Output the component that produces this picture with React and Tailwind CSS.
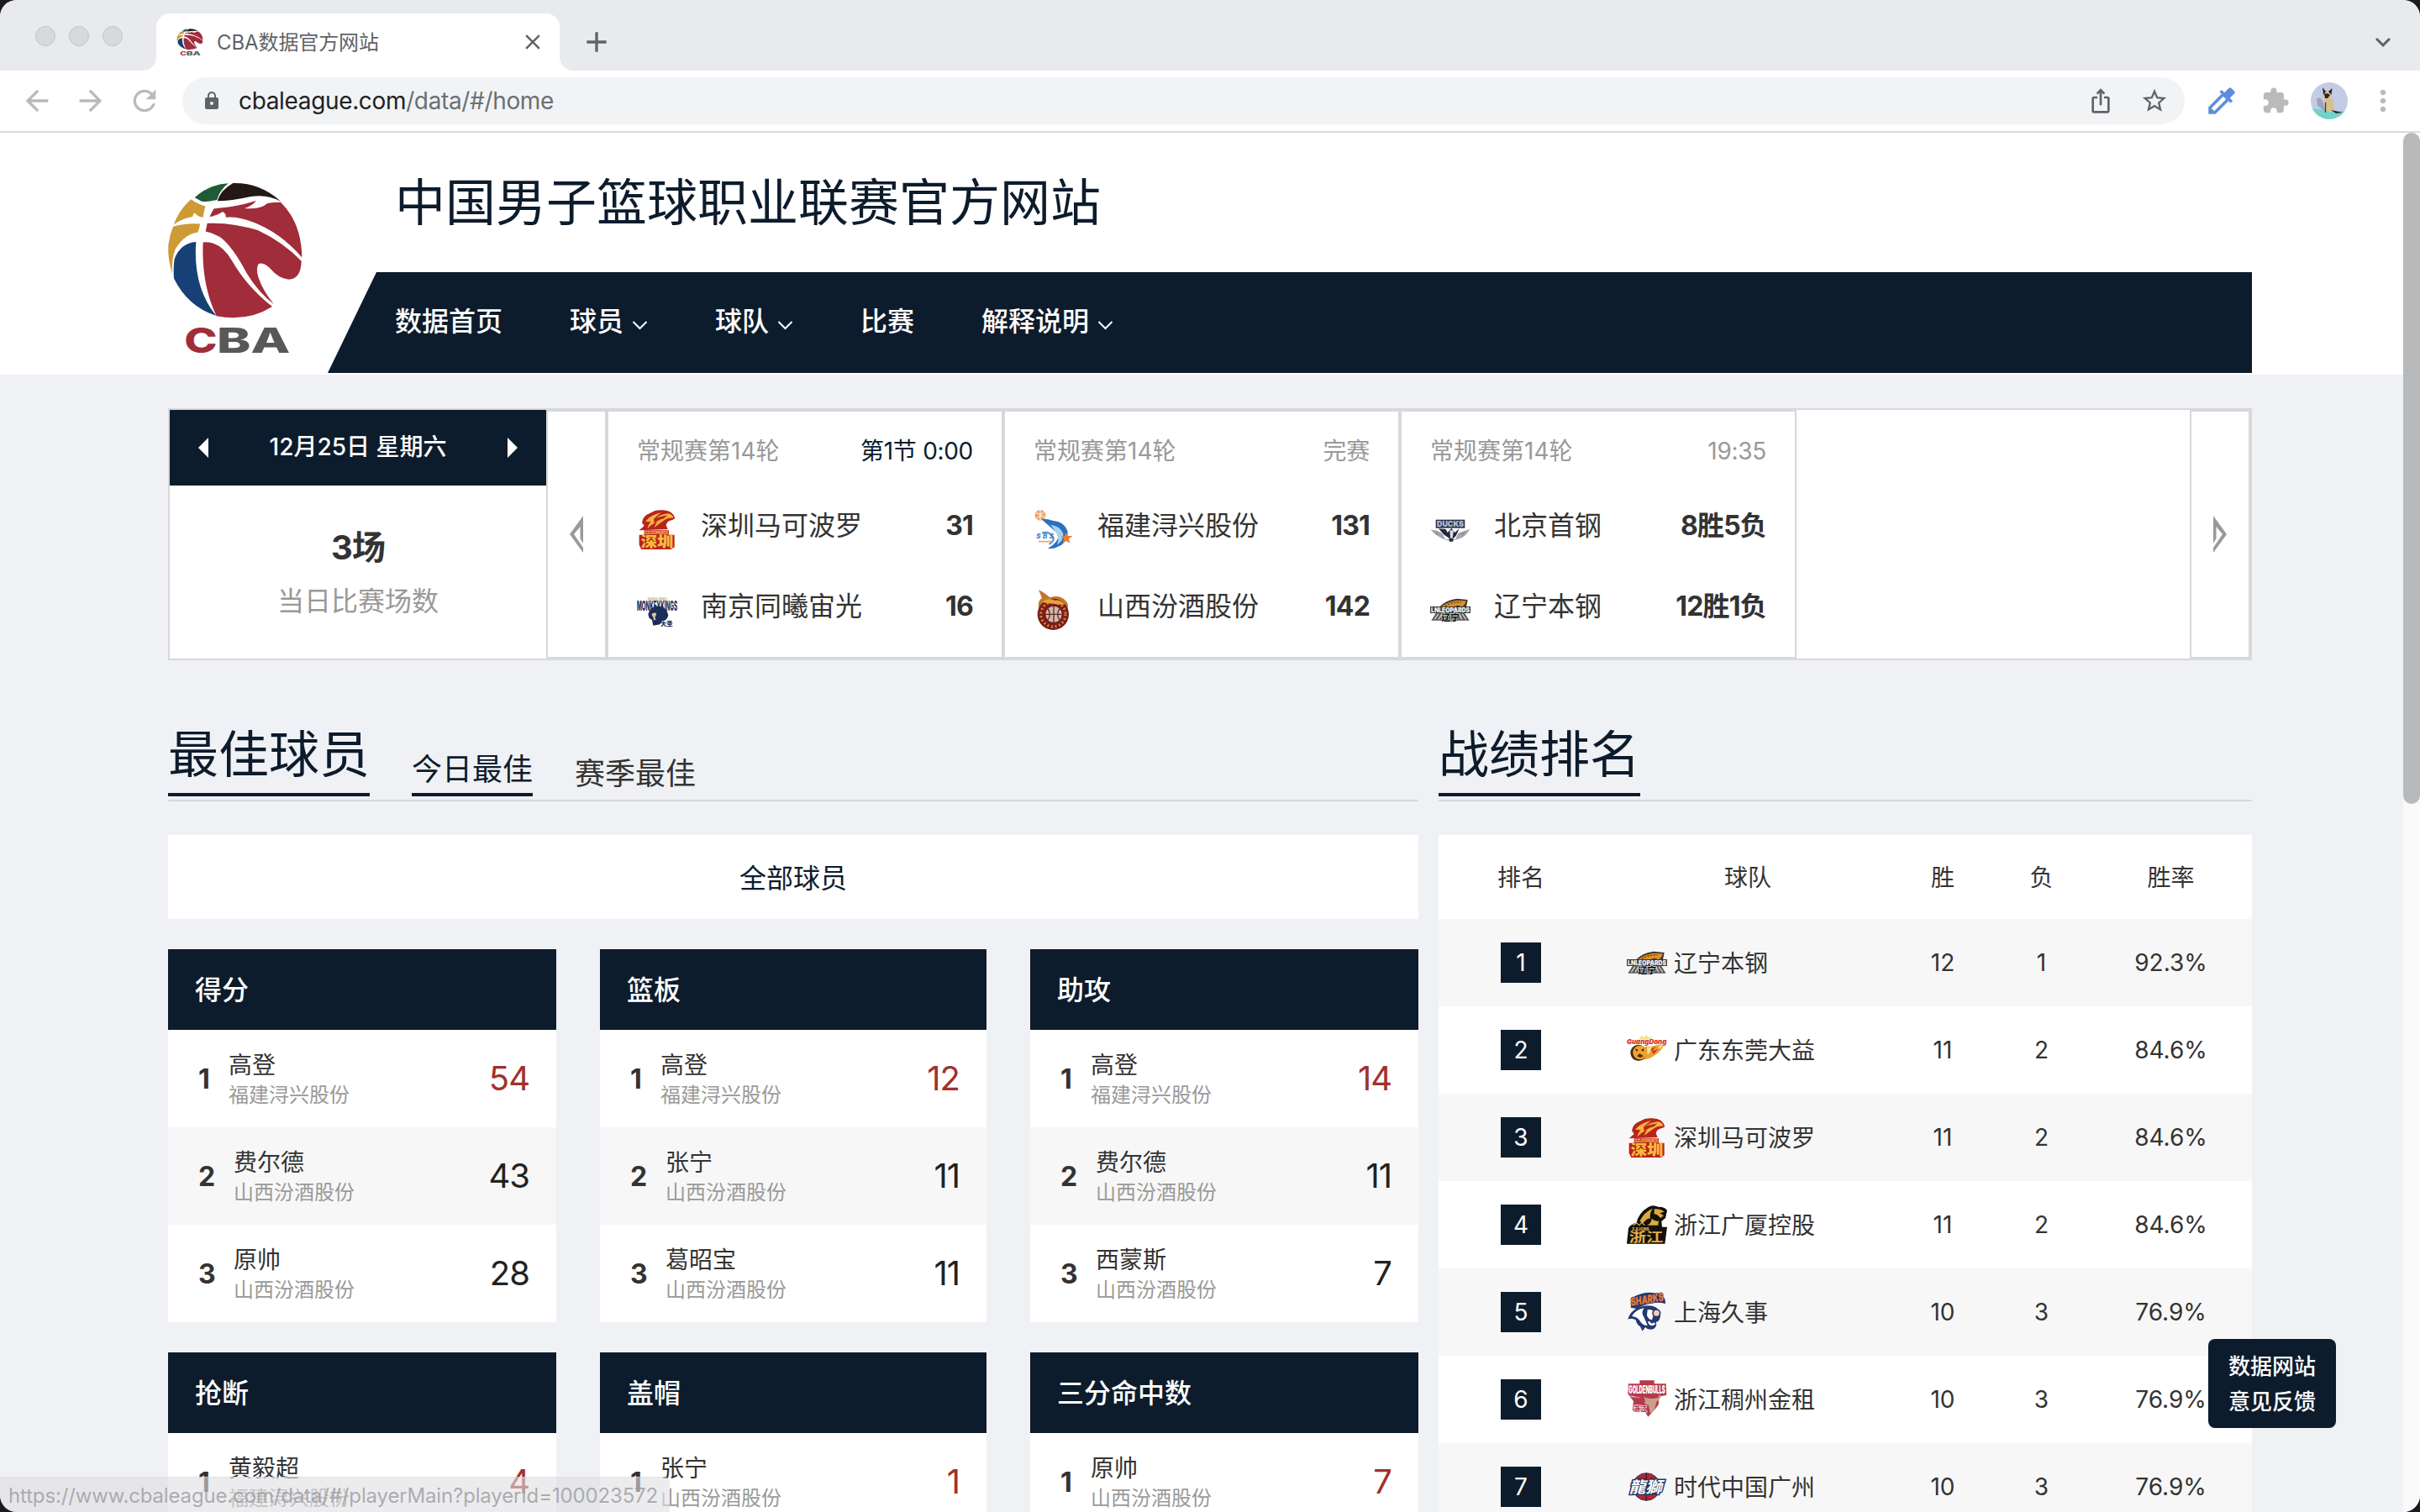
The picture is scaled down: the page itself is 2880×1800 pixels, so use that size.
import React from "react";
import {
  MdAdd,
  MdArrowBack,
  MdArrowForward,
  MdClose,
  MdColorize,
  MdExtension,
  MdIosShare,
  MdKeyboardArrowDown,
  MdLock,
  MdMoreVert,
  MdRefresh,
  MdStarBorder,
} from "react-icons/md";

/* ---------- logos ---------- */

function CbaLogo({ className }) {
  return (
    <svg viewBox="24 34 492 620" preserveAspectRatio="none" className={className}>
      <path fill="#1d5c36" d="M125 92Q175 45 245 41Q214 65 205 99Q176 108 150 105Q137 98 125 92Z" />
      <path fill="#231815" d="M262 40Q360 38 432 105Q385 78 325 88Q255 104 206 104Q217 65 262 40Z" />
      <path fill="#cd9a35" d="M112 98Q135 115 163 122Q158 140 155 162Q135 160 126 146Q120 146 118 160Q80 166 50 188Q70 135 112 98Z" />
      <path fill="#cd9a35" d="M48 195Q90 182 144 185Q142 205 136 216Q90 220 56 275Q42 310 45 362Q28 310 31 260Q36 225 48 195Z" />
      <path fill="#174076" d="M53 310Q75 254 130 250Q118 410 202 513Q100 480 51 380Q48 340 53 310Z" />
      <path fill="#a12c3a" d="M193 131Q290 122 345 102Q330 122 302 130Q360 135 385 112Q405 108 432 108Q506 180 508 305Q430 215 330 178Q280 158 236 162Q238 148 225 142Q205 156 178 160Z" />
      <path fill="#a12c3a" d="M170 183Q260 180 350 208Q440 250 506 318Q505 382 460 384Q425 380 395 345Q370 320 353 328Q343 342 352 375Q367 422 408 472Q352 430 310 360Q260 265 215 232Q190 218 164 212Z" />
      <path fill="#a12c3a" d="M155 251Q215 245 258 316Q312 410 402 480Q315 535 203 514Q148 400 155 251Z" />
      <text x="88" y="646" fontFamily="Inter, sans-serif" fontWeight="800" fontSize="124" textLength="118" lengthAdjust="spacingAndGlyphs" fill="#a12c3a">C</text>
      <text x="204" y="646" fontFamily="Inter, sans-serif" fontWeight="800" fontSize="124" textLength="262" lengthAdjust="spacingAndGlyphs" fill="#595757">BA</text>
    </svg>
  );
}

const CJK = '"Noto Sans CJK SC", sans-serif';
const LATIN = "Inter, sans-serif";

function Mark({ id }) {
  switch (id) {
    case "shenzhen":
      return (
        <>
          <path fill="#b8231c" d="M18 48Q22 22 48 14Q66 2 92 4Q128 4 136 34L128 38Q106 42 104 58L110 72L8 76L26 60Z" />
          <path fill="#f6b53c" d="M30 44Q50 20 88 12Q66 26 62 36Q84 18 112 16Q128 20 130 32Q112 30 100 38Q84 48 62 66Q64 54 74 46Q52 54 38 70Q38 58 50 46Q38 44 30 44Z" />
          <path fill="#b8231c" d="M60 34Q84 26 110 22L96 34Q76 38 62 52Z" />
          <path fill="#b8231c" d="M26 76H114V92H134V136L122 144H16L8 128V92H26Z" />
          <text x="28" y="90" fontFamily={LATIN} fontWeight="800" fontSize="14" textLength="84" fill="#f6b53c">SZLEOPARDS</text>
          <text x="14" y="136" fontFamily={CJK} fontWeight="900" fontSize="50" textLength="116" lengthAdjust="spacingAndGlyphs" fill="#f8bc40">深圳</text>
        </>
      );
    case "nanjing":
      return (
        <>
          <text x="38" y="38" fontFamily={LATIN} fontWeight="800" fontSize="16" textLength="70" fill="#cdbfa0">NANJING</text>
          <text x="0" y="76" fontFamily={LATIN} fontWeight="800" fontSize="48" textLength="144" lengthAdjust="spacingAndGlyphs" fill="#1c2d59">MONKEYKINGS</text>
          <path fill="#1c2d59" d="M40 88Q46 60 76 58Q108 62 112 92Q106 112 92 110L82 124L58 128L54 108L44 102Z" />
          <path fill="#dfc9a4" d="M52 88Q62 78 70 86L64 100L68 108H60L58 98Z" />
          <text x="84" y="128" fontFamily={CJK} fontWeight="900" fontSize="22" fill="#1c2d59">大圣</text>
        </>
      );
    case "fujian":
      return (
        <>
          <circle cx="24" cy="22" r="19" fill="#f2a168" />
          <path d="M8 14Q28 24 38 10M12 34Q26 16 40 30M24 3V40" stroke="#fff" strokeWidth="3" fill="none" />
          <path fill="#2c70c0" d="M28 36Q46 34 70 42Q112 46 122 82Q124 110 100 128L74 140L50 142Q92 116 90 90Q66 70 28 36Z" />
          <path fill="#a8d3f0" d="M60 56Q96 60 106 88Q108 112 84 128Q98 98 60 56Z" />
          <path d="M30 86Q54 78 66 96Q80 110 56 126" stroke="#4c8ed0" strokeWidth="6" fill="none" />
          <text x="10" y="106" fontFamily={LATIN} fontWeight="800" fontStyle="italic" fontSize="24" textLength="62" fill="#3f7fc6">SBS</text>
          <path fill="#e77c35" d="M116 84L122 96H140L126 106L130 122L116 114L104 122L108 106L98 98L110 96Z" />
          <path d="M18 116H66" stroke="#f2a168" strokeWidth="5" />
        </>
      );
    case "shanxi":
      return (
        <>
          <path fill="#c5762b" d="M18 0Q44 14 58 28Q98 14 120 46Q128 66 116 70L20 74Q12 40 30 30Z" />
          <circle cx="70" cy="88" r="56" fill="#7a1d1b" />
          <circle cx="70" cy="88" r="44" fill="none" stroke="#d48a35" strokeWidth="9" strokeDasharray="6 8" />
          <circle cx="72" cy="88" r="29" fill="#cdb9ae" />
          <path d="M72 58V118M42 88H102M50 66Q66 88 50 110M94 66Q78 88 94 110" stroke="#6d2220" strokeWidth="4" fill="none" />
          <path fill="#e7a13e" d="M30 44Q52 26 76 38Q96 34 112 52Q94 56 74 50Q48 50 30 44Z" />
        </>
      );
    case "beijing":
      return (
        <>
          <path fill="#a7a3b7" d="M2 74Q30 74 44 88L54 108H90L100 86Q120 78 142 72Q126 98 110 104L84 112H60Q22 98 2 74Z" />
          <rect x="20" y="38" width="104" height="30" fill="#2b3650" />
          <text x="24" y="63" fontFamily={LATIN} fontWeight="900" fontSize="28" textLength="96" lengthAdjust="spacingAndGlyphs" fill="#b8c0d2">DUCKS</text>
          <path fill="#232a3f" d="M30 70L56 72L62 84L76 68L88 84L104 70L92 96L82 106V116H68V104L50 92Z" />
          <path fill="#ddd5e8" d="M70 76H84L80 104H72Z" />
          <path fill="#b1823d" d="M14 80L34 90L24 92ZM128 80L108 90L118 92Z" />
        </>
      );
    case "liaoning":
      return (
        <>
          <path fill="#3a342c" d="M30 64Q56 36 96 32L134 36L128 66H30Z" />
          <path fill="#d98f2b" d="M40 60Q64 42 96 38L128 40Q124 58 112 62Q100 50 84 62Z" />
          <path d="M54 58Q76 44 110 44" stroke="#5b3a14" strokeWidth="4" strokeDasharray="6 5" fill="none" />
          <path fill="#5a5a5a" d="M22 82H122L140 110H94V114H46V110H4Z" />
          <path d="M30 86L16 106M42 86L30 106M104 86L114 106M114 86L128 106" stroke="#d4d4d4" strokeWidth="4" />
          <rect x="0" y="60" width="144" height="24" fill="#3a3a3a" />
          <text x="3" y="80" fontFamily={LATIN} fontWeight="900" fontSize="22" textLength="138" lengthAdjust="spacingAndGlyphs" fill="#f4f4f4">LNLEOPARDS</text>
          <text x="40" y="112" fontFamily={CJK} fontWeight="900" fontSize="32" textLength="66" lengthAdjust="spacingAndGlyphs" fill="#0c0c0c" stroke="#d6d6d6" strokeWidth="4" paintOrder="stroke">辽宁</text>
        </>
      );
    case "guangdong":
      return (
        <>
          <path fill="#f9e08a" d="M44 34L52 20L60 28L70 18L78 28L90 24L88 38H40Z" />
          <path fill="#eba233" d="M66 60Q104 60 140 42Q126 76 98 92Q82 104 58 106Z" />
          <path fill="#c5462a" d="M84 68L104 60L92 76L112 68L96 88Z" />
          <path fill="#f9e08a" d="M72 62L90 60L82 82L74 90ZM112 60L132 50L118 68Z" />
          <circle cx="42" cy="82" r="29" fill="#4a2b18" />
          <circle cx="47" cy="81" r="25" fill="#eda72f" />
          <path fill="#5a2c13" d="M30 66L42 72L34 78ZM62 66L50 72L60 78ZM36 94L46 84L60 94L48 100Z" />
          <text x="0" y="50" fontFamily={LATIN} fontWeight="900" fontStyle="italic" fontSize="24" textLength="142" lengthAdjust="spacingAndGlyphs" fill="#d5352d" stroke="#fff" strokeWidth="3" paintOrder="stroke">GuangDong</text>
        </>
      );
    case "guangsha":
      return (
        <>
          <path fill="#14110c" d="M0 140L6 84Q14 70 34 66Q44 28 76 10Q92 -2 112 8Q140 8 144 22L138 48L124 60L126 80H144L136 140Z" />
          <path fill="#dca93f" d="M46 60Q60 28 92 14Q80 34 84 50Q74 46 58 66ZM98 16Q120 14 134 26L118 30L132 40L120 48Q110 34 98 34ZM88 50Q104 62 114 58L112 74H72Q90 66 88 50Z" />
          <path d="M22 74L36 66L44 74L54 64L64 74" stroke="#dca93f" strokeWidth="4" fill="none" />
          <text x="18" y="92" fontFamily={LATIN} fontWeight="900" fontSize="14" textLength="62" fill="#dca93f">ZJLIONS</text>
          <text x="8" y="132" fontFamily={CJK} fontWeight="700" fontSize="44" textLength="122" lengthAdjust="spacingAndGlyphs" fill="#e2b045">浙江</text>
        </>
      );
    case "shanghai":
      return (
        <>
          <path fill="#23386e" d="M20 20Q70 -8 116 8Q140 16 138 42Q90 30 36 60L14 56Z" />
          <text x="16" y="50" transform="rotate(-9 16 50)" fontFamily={LATIN} fontWeight="900" fontStyle="italic" fontSize="40" textLength="118" lengthAdjust="spacingAndGlyphs" fill="#e97832" stroke="#23386e" strokeWidth="4" paintOrder="stroke">SHARKS</text>
          <path fill="#23386e" d="M4 98Q14 60 60 50Q110 44 120 76Q122 104 104 108Q110 122 96 132Q76 138 66 126L56 140L48 124Q36 118 32 100Q18 92 4 98Z" />
          <path fill="#fff" d="M18 86Q34 62 62 58Q50 74 60 88Q66 100 74 120Q58 120 50 108Q42 90 18 86ZM74 64Q92 60 98 74L90 100Q78 100 72 84Z" />
          <circle cx="106" cy="76" r="13" fill="#f0cdb4" stroke="#23386e" strokeWidth="5" />
          <path d="M78 106Q86 124 100 112" stroke="#fff" strokeWidth="8" fill="none" />
        </>
      );
    case "bulls":
      return (
        <>
          <path fill="#b53a4c" d="M46 4H98V16H140L142 56L114 62V92L76 134L62 110L20 112L24 78L10 60L4 52L6 16H46Z" />
          <text x="7" y="50" fontFamily={LATIN} fontWeight="900" fontSize="40" textLength="130" lengthAdjust="spacingAndGlyphs" fill="#fff">GOLDENBULLS</text>
          <path fill="#fff" d="M8 58L50 66L30 68ZM112 92L122 64L142 60V140H80Z" />
          <path fill="#b53a4c" d="M14 64Q50 62 76 78L64 108L34 104L50 92L22 86L40 80Z" />
          <path fill="#caa08a" d="M60 62Q80 74 112 66Q118 54 116 50Q130 66 106 80L98 112L84 122L78 94L62 86Q70 76 60 62Z" />
          <text x="24" y="114" fontFamily={CJK} fontWeight="900" fontSize="24" fill="#b53a4c" stroke="#fff" strokeWidth="3" paintOrder="stroke">浙江</text>
        </>
      );
    case "guangzhou":
      return (
        <>
          <circle cx="70" cy="72" r="49" fill="#b9252d" stroke="#27375f" strokeWidth="3" />
          <path d="M70 24V120M30 44Q70 60 110 44M30 100Q70 84 110 100" stroke="#4c1320" strokeWidth="4" fill="none" />
          <text x="8" y="93" fontFamily={CJK} fontWeight="700" fontStyle="italic" fontSize="56" textLength="118" lengthAdjust="spacingAndGlyphs" fill="#fff" stroke="#27375f" strokeWidth="9" paintOrder="stroke">龍獅</text>
        </>
      );
    default:
      return null;
  }
}

function TeamLogo({ id }) {
  return (
    <svg viewBox="0 0 144 144" className="h-12 w-12 shrink-0 overflow-visible">
      <Mark id={id} />
    </svg>
  );
}

/* ---------- data ---------- */

const NAV = [
  { label: "数据首页" },
  { label: "球员", menu: true },
  { label: "球队", menu: true },
  { label: "比赛" },
  { label: "解释说明", menu: true },
];

const GAMES = [
  { status: "第1节 0:00", live: true, teams: [["shenzhen", "深圳马可波罗", "31"], ["nanjing", "南京同曦宙光", "16"]] },
  { status: "完赛", teams: [["fujian", "福建浔兴股份", "131"], ["shanxi", "山西汾酒股份", "142"]] },
  { status: "19:35", teams: [["beijing", "北京首钢", "8胜5负"], ["liaoning", "辽宁本钢", "12胜1负"]] },
];

const FJ = "福建浔兴股份";
const SX = "山西汾酒股份";
const LEADERS = [
  { title: "得分", rows: [["高登", FJ, 54], ["费尔德", SX, 43], ["原帅", SX, 28]] },
  { title: "篮板", rows: [["高登", FJ, 12], ["张宁", SX, 11], ["葛昭宝", SX, 11]] },
  { title: "助攻", rows: [["高登", FJ, 14], ["费尔德", SX, 11], ["西蒙斯", SX, 7]] },
  { title: "抢断", rows: [["黄毅超", FJ, 4]] },
  { title: "盖帽", rows: [["张宁", SX, 1]] },
  { title: "三分命中数", rows: [["原帅", SX, 7]] },
];

const STANDINGS = [
  ["liaoning", "辽宁本钢", 12, 1, "92.3%"],
  ["guangdong", "广东东莞大益", 11, 2, "84.6%"],
  ["shenzhen", "深圳马可波罗", 11, 2, "84.6%"],
  ["guangsha", "浙江广厦控股", 11, 2, "84.6%"],
  ["shanghai", "上海久事", 10, 3, "76.9%"],
  ["bulls", "浙江稠州金租", 10, 3, "76.9%"],
  ["guangzhou", "时代中国广州", 10, 3, "76.9%"],
];

/* ---------- browser chrome ---------- */

function TabStrip() {
  return (
    <div className="flex h-[84px] shrink-0 items-end bg-[#e8eaed]">
      <div className="flex h-[82px] w-[186px] items-center gap-4 pl-[42px]">
        <span className="h-6 w-6 rounded-full border-[1.5px] border-[#c3c4c7] bg-[#d8d9dc]" />
        <span className="h-6 w-6 rounded-full border-[1.5px] border-[#c3c4c7] bg-[#d8d9dc]" />
        <span className="h-6 w-6 rounded-full border-[1.5px] border-[#c3c4c7] bg-[#d8d9dc]" />
      </div>
      <div className="relative flex h-[68px] w-[480px] items-center rounded-t-[16px] bg-white pl-6">
        <svg viewBox="0 0 16 16" className="absolute bottom-0 -left-4 h-4 w-4">
          <path d="M16 0V16H0A16 16 0 0 0 16 0Z" fill="#fff" />
        </svg>
        <svg viewBox="0 0 16 16" className="absolute -right-4 bottom-0 h-4 w-4">
          <path d="M0 0V16H16A16 16 0 0 1 0 0Z" fill="#fff" />
        </svg>
        <CbaLogo className="h-8 w-8" />
        <span className="ml-4 w-[361px] pt-px text-[24px] leading-8 tracking-[-0.1px] text-[#5f6368]">CBA数据官方网站</span>
        <MdClose className="h-[30px] w-[30px] shrink-0 text-[#5f6368]" />
      </div>
      <div className="flex h-[68px] flex-1 items-center justify-between pr-[26px] pl-[24px]">
        <MdAdd className="h-[40px] w-[40px] text-[#5f6368]" />
        <MdKeyboardArrowDown className="h-9 w-9 text-[#5f6368]" />
      </div>
    </div>
  );
}

function Avatar() {
  return (
    <svg viewBox="0 0 44 44" className="h-11 w-11 overflow-hidden rounded-full">
      <rect width="44" height="44" fill="#c3cbe6" />
      <path d="M0 31L44 35V44H0Z" fill="#74d3c8" />
      <path d="M7 20Q11 16 14 22L17 34L8 28Z" fill="#9aa3c0" />
      <path d="M16 10H24L24 18Q29 24 28 35H17L16 20Z" fill="#d7bf92" />
      <path d="M14 6L18 11L15 15ZM25.500 7L21 11L24.500 15ZM16 14Q20 12 23 15L20 19H17Z" fill="#2b2523" />
      <path d="M24 33L38 36L30 37Z" fill="#2b2523" />
      <path d="M17.500 24V36" stroke="#4a3a2c" strokeWidth="1.4" />
    </svg>
  );
}

function Toolbar() {
  return (
    <div className="flex h-[74px] shrink-0 items-center border-b-2 border-[#dadbde] bg-white">
      <div className="flex w-[217px] items-center gap-6 pl-6">
        <MdArrowBack className="h-10 w-10 text-[#bababc]" />
        <MdArrowForward className="h-10 w-10 text-[#bababc]" />
        <MdRefresh className="h-10 w-10 text-[#bababc]" />
      </div>
      <div className="flex h-14 w-[2383px] items-center rounded-full bg-[#f1f3f4] pr-[19px] pl-[23px]">
        <MdLock className="h-6 w-6 text-[#5f6368]" />
        <span className="ml-5 flex-1 text-[28px] leading-9 tracking-[-0.35px] text-[#202124]">
          cbaleague.com<span className="text-[#6b6f73]">/data/#/home</span>
        </span>
        <MdIosShare className="mr-[31px] h-8 w-8 text-[#5f6368]" />
        <MdStarBorder className="h-[34px] w-[34px] text-[#5f6368]" />
      </div>
      <div className="flex flex-1 items-center pl-[23px]">
        <MdColorize className="h-[42px] w-[42px] text-[#5b8fdc]" />
        <MdExtension className="ml-[26px] h-[34px] w-[34px] text-[#bababc]" />
        <span className="ml-[25px]">
          <Avatar />
        </span>
        <MdMoreVert className="ml-[22px] h-10 w-10 text-[#bababc]" />
      </div>
    </div>
  );
}

/* ---------- page ---------- */

function SiteHeader() {
  return (
    <header className="flex h-[288px] shrink-0 bg-white pl-[198px]">
      <CbaLogo className="mt-[58px] h-[207px] w-[164px]" />
      <div className="flex w-[2318px] flex-col">
        <h1 className="flex h-[166px] items-center pl-[108px] text-[60px] leading-none text-[#0d1c2c]">中国男子篮球职业联赛官方网站</h1>
        <nav className="ml-[28px] flex h-[120px] items-center gap-20 bg-[#0d1c2c] pl-[80px] text-[32px] font-medium text-white [clip-path:polygon(58px_0,100%_0,100%_100%,0_100%)]">
          {NAV.map((item) => (
            <span key={item.label} className="flex items-center gap-[10px] pb-[2px] leading-none">
              {item.label}
              {item.menu && (
                <svg viewBox="0 0 19 12" className="mt-2 h-3 w-[19px]">
                  <path d="M1.5 2L9.5 10L17.5 2" fill="none" stroke="#fff" strokeWidth="2" />
                </svg>
              )}
            </span>
          ))}
        </nav>
      </div>
    </header>
  );
}

function GameCard({ game }) {
  return (
    <div className="w-[472px] border-2 border-[#d7d8d9] px-[34px]">
      <div className="flex h-[92px] items-center justify-between pt-px text-[28px] text-[#999]">
        <span>常规赛第14轮</span>
        <span className={game.live ? "tracking-[-0.3px] text-[#0d1c2c]" : "tracking-[-0.3px]"}>{game.status}</span>
      </div>
      {game.teams.map(([id, name, score]) => (
        <div key={name} className="flex h-24 items-center text-[32px] text-[#333]">
          <TeamLogo id={id} />
          <span className="ml-7 flex-1 pb-[9px] leading-none">{name}</span>
          <span className="pb-[9px] leading-none font-bold tracking-[-0.8px]">{score}</span>
        </div>
      ))}
    </div>
  );
}

function Schedule() {
  return (
    <section className="flex h-[300px] border-2 border-[#d7d8d9] bg-white">
      <div className="flex w-[448px] flex-col">
        <div className="flex h-[90px] items-center justify-between bg-[#0d1c2c] px-[34px] text-[28px] text-white">
          <svg viewBox="0 0 12 24" className="h-6 w-3">
            <path d="M12 0V24L0 12Z" fill="#fff" />
          </svg>
          <span className="pb-[2px] leading-none font-medium">12月25日 星期六</span>
          <svg viewBox="0 0 12 24" className="h-6 w-3">
            <path d="M0 0V24L12 12Z" fill="#fff" />
          </svg>
        </div>
        <div className="flex flex-1 flex-col items-center pt-[54px]">
          <span className="text-[40px] leading-10 font-bold tracking-[-0.8px] text-[#333]">3场</span>
          <span className="mt-6 text-[32px] leading-10 text-[#999]">当日比赛场数</span>
        </div>
      </div>
      <div className="flex w-[72px] items-center justify-center border-2 border-[#d7d8d9]">
        <svg viewBox="0 0 16 44" className="h-11 w-4">
          <path fill="#999" d="M16 0V33L12.500 27V13L5 22L16 38V44L0 22Z" />
        </svg>
      </div>
      {GAMES.map((g) => (
        <GameCard key={g.status} game={g} />
      ))}
      <div className="flex-1" />
      <div className="flex w-[72px] items-center justify-center border-2 border-[#d7d8d9]">
        <svg viewBox="0 0 16 44" className="h-11 w-4">
          <path fill="#999" d="M0 0V33L3.500 27V13L11 22L0 38V44L16 22Z" />
        </svg>
      </div>
    </section>
  );
}

function LeaderCard({ card }) {
  return (
    <div className="bg-white">
      <div className="flex h-24 items-center bg-[#0d1c2c] px-8 pt-[2px] text-[32px] font-medium text-white">{card.title}</div>
      {card.rows.map(([name, team, value], i) => (
        <div key={name} className={i === 1 ? "flex h-[116px] items-center bg-[#f7f7f7] pr-8 pl-9" : "flex h-[116px] items-center pr-8 pl-9"}>
          <span className={i === 0 ? "w-9 pt-px text-[32px] font-bold text-[#333]" : "w-[42px] pt-px text-[32px] font-bold text-[#333]"}>{i + 1}</span>
          <div className="flex flex-1 flex-col pt-1">
            <span className="text-[28px] leading-9 text-[#333]">{name}</span>
            <span className="text-[24px] leading-9 text-[#999]">{team}</span>
          </div>
          <span className={i === 0 ? "text-[40px] tracking-[-1px] text-[#a0312c]" : "text-[40px] tracking-[-1px] text-[#222]"}>{value}</span>
        </div>
      ))}
    </div>
  );
}

function BestPlayers() {
  return (
    <section className="w-[1488px]">
      <div className="flex h-[74px] items-end gap-[50px] border-b-2 border-[#d7d8d9] pb-1">
        <h2 className="border-b-4 border-[#0d1c2c] pb-[14px] text-[60px] leading-[64px] text-[#0d1c2c]">最佳球员</h2>
        <span className="border-b-4 border-[#0d1c2c] pb-[10px] text-[36px] leading-9 text-[#0d1c2c]">今日最佳</span>
        <span className="pb-[9px] text-[36px] leading-9 text-[#333]">赛季最佳</span>
      </div>
      <div className="mt-10 flex h-[100px] items-center justify-center bg-white pt-[3px] text-[32px] text-[#0d1c2c]">全部球员</div>
      <div className="mt-9 grid grid-cols-[462px_460px_462px] gap-x-[52px] gap-y-9">
        {LEADERS.map((c) => (
          <LeaderCard key={c.title} card={c} />
        ))}
      </div>
    </section>
  );
}

function Standings() {
  return (
    <section className="w-[968px]">
      <div className="flex h-[74px] items-end border-b-2 border-[#d7d8d9] pb-1">
        <h2 className="border-b-4 border-[#0d1c2c] pb-[14px] text-[60px] leading-[64px] text-[#0d1c2c]">战绩排名</h2>
      </div>
      <div className="mt-10 grid h-[100px] grid-cols-[196px_344px_120px_115px_193px] items-center bg-white pt-px text-center text-[28px] text-[#333]">
        <span>排名</span>
        <span>球队</span>
        <span>胜</span>
        <span>负</span>
        <span>胜率</span>
      </div>
      {STANDINGS.map(([id, name, won, lost, pct], i) => (
        <div
          key={id}
          className={
            i % 2 === 0
              ? "grid h-[104px] grid-cols-[196px_344px_120px_115px_193px] items-center bg-[#f7f7f7] text-center text-[28px] text-[#333]"
              : "grid h-[104px] grid-cols-[196px_344px_120px_115px_193px] items-center bg-white text-center text-[28px] text-[#333]"
          }
        >
          <span className="flex h-12 w-12 items-center justify-center justify-self-center bg-[#0d1c2c] text-white">{i + 1}</span>
          <span className="flex items-center gap-2 pl-7">
            <TeamLogo id={id} />
            <span className="pt-px">{name}</span>
          </span>
          <span>{won}</span>
          <span>{lost}</span>
          <span>{pct}</span>
        </div>
      ))}
    </section>
  );
}

export default function App() {
  return (
    <div className="h-[1800px] w-[2880px] overflow-hidden bg-[#1b1b1f]">
      <div className="relative flex h-[1800px] w-[2880px] flex-col overflow-hidden rounded-[20px] bg-[#f0f1f5] font-['Inter','Noto_Sans_CJK_SC',sans-serif]">
        <TabStrip />
        <Toolbar />
        <div className="flex h-[1642px]">
          <div className="flex w-[2860px] flex-col overflow-hidden">
            <SiteHeader />
            <main className="mt-10 ml-[200px] w-[2480px]">
              <Schedule />
              <div className="mt-[94px] flex justify-between">
                <BestPlayers />
                <Standings />
              </div>
            </main>
          </div>
          <div className="w-5 bg-[#fafafa]">
            <div className="h-[799px] rounded-full bg-[#b8b9bb]" />
          </div>
        </div>
        <div className="absolute top-[1594px] left-[2628px] flex h-[106px] w-[152px] flex-col items-center justify-center rounded-lg bg-[#0d1c2c] pt-[2px] text-[26px] leading-[42px] font-medium text-white">
          <span>数据网站</span>
          <span>意见反馈</span>
        </div>
        <div className="absolute bottom-0 left-0 flex h-[42px] w-[797px] items-center rounded-tr-lg border-t border-[#d9dadc]/60 bg-[#dfe0e3]/60 pt-[2px] pl-[10px] text-[24px] tracking-[-0.15px] whitespace-nowrap text-[#9a9b9e]/80">
          https://www.cbaleague.com/data/#/playerMain?playerId=100023572
        </div>
      </div>
    </div>
  );
}
